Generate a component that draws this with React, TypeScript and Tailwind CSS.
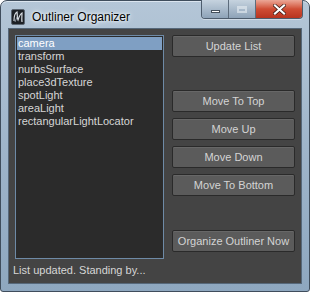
import React from "react";

const items = [
  "camera",
  "transform",
  "nurbsSurface",
  "place3dTexture",
  "spotLight",
  "areaLight",
  "rectangularLightLocator",
];

function MayaIcon() {
  return (
    <svg width="14" height="16" viewBox="0 0 14 16" className="shrink-0">
      <rect x="0.5" y="0.5" width="13" height="15" rx="1.5" fill="#1d2126" stroke="#5a6571" />
      <path d="M3 12 C3 7 4 4 6 3 C6.5 6 6 9 7 11 C8 8 9 5 11 4 C11 7 10.5 10 11 13" fill="none" stroke="#d9dee3" strokeWidth="1.2" />
      <path d="M4 13 L6 8" stroke="#9aa6b2" strokeWidth="0.8" />
    </svg>
  );
}

function Btn({ label, className = "" }: { label: string; className?: string }) {
  return (
    <button
      className={
        "h-[22px] w-full rounded-[2px] border border-[#2a2a2a] bg-[#5b5b5b] text-[11px] leading-none text-[#d4d4d4] shadow-[inset_0_1px_0_#676767] " +
        className
      }
    >
      {label}
    </button>
  );
}

export default function App() {
  return (
    <div className="w-[310px] h-[292px] bg-white font-['Liberation_Sans',Arial,sans-serif]">
      <div className="flex h-full w-full flex-col rounded-t-[7px] rounded-b-[3px] border border-[#3f4d5c] bg-gradient-to-b from-[#b4c6d7] via-[#9fb5ca] to-[#8ea7bf] shadow-[inset_0_1px_0_#dbe5ef]">
        {/* Title bar */}
        <div className="flex h-[29px] items-start">
          <div className="flex items-center gap-[7px] pl-[10px] pt-[7px]">
            <MayaIcon />
            <span className="text-[12px] text-black [text-shadow:0_0_6px_#ffffff,0_0_3px_#ffffff]">Outliner Organizer</span>
          </div>
          <div className="ml-auto mr-[6px] flex h-[19px] -mt-px overflow-hidden rounded-b-[4px] border border-t-0 border-[#4e5d6d] shadow-[0_1px_0_#d0dbe6]">
            <div className="flex w-[27px] items-end justify-center bg-gradient-to-b from-[#c6d3df] to-[#8ea3b8] pb-[5px] border-r border-[#5d6c7c]">
              <div className="h-[3px] w-[9px] bg-white border border-[#44505c]" />
            </div>
            <div className="flex w-[27px] items-center justify-center bg-gradient-to-b from-[#c6d3df] to-[#8ea3b8] border-r border-[#5d6c7c]">
              <div className="h-[7px] w-[10px] border-2 border-t-[3px] border-[#e8eef4] opacity-60" />
            </div>
            <div className="flex w-[46px] items-center justify-center bg-gradient-to-b from-[#eba797] via-[#cf4d34] to-[#b8341f]">
              <svg width="13" height="11" viewBox="0 0 13 11">
                <path d="M2 1.5 L11 9.5 M11 1.5 L2 9.5" stroke="#3a1a14" strokeWidth="3.6" strokeLinecap="square" />
                <path d="M2 1.5 L11 9.5 M11 1.5 L2 9.5" stroke="#ffffff" strokeWidth="2.2" strokeLinecap="square" />
              </svg>
            </div>
          </div>
        </div>

        {/* Client area */}
        <div className="mx-[7px] mb-[7px] flex flex-1 flex-col border border-[#56687a] bg-[#444444] p-[6px]">
          <div className="flex h-[224px] gap-[8px]">
            <div className="w-[149px] shrink-0 border border-[#6e8aa6] bg-[#2b2b2b] p-px">
              {items.map((it, i) => (
                <div
                  key={it}
                  className={
                    "h-[13px] pl-[1px] text-[11px] leading-[13px] " +
                    (i === 0 ? "bg-[#7f9fc3] text-white" : "text-[#d6d6d6]")
                  }
                >
                  {it}
                </div>
              ))}
            </div>
            <div className="flex w-[124px] flex-col">
              <Btn label="Update List" />
              <div className="mt-[33px] flex flex-col gap-[6px]">
                <Btn label="Move To Top" />
                <Btn label="Move Up" />
                <Btn label="Move Down" />
                <Btn label="Move To Bottom" />
              </div>
              <Btn label="Organize Outliner Now" className="mt-[34px]" />
            </div>
          </div>
          <div className="-ml-[2px] mt-[5px] text-[11px] leading-[13px] text-[#d6d6d6]">List updated. Standing by...</div>
        </div>
      </div>
    </div>
  );
}
